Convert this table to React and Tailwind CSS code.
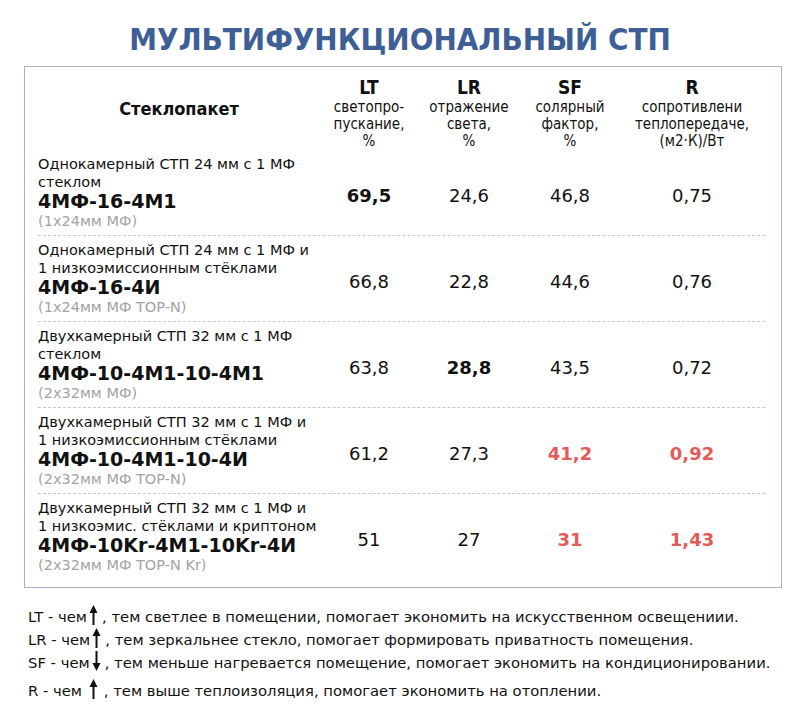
import React from "react";

const rows = [
  {
    desc: ["Однокамерный СТП 24 мм с 1 МФ", "стеклом"],
    code: "4МФ-16-4М1",
    note: "(1x24мм МФ)",
    vals: [
      { v: "69,5", b: true },
      { v: "24,6" },
      { v: "46,8" },
      { v: "0,75" },
    ],
  },
  {
    desc: ["Однокамерный СТП 24 мм с 1 МФ и", "1 низкоэмиссионным стёклами"],
    code: "4МФ-16-4И",
    note: "(1x24мм МФ TOP-N)",
    vals: [{ v: "66,8" }, { v: "22,8" }, { v: "44,6" }, { v: "0,76" }],
  },
  {
    desc: ["Двухкамерный СТП 32 мм с 1 МФ", "стеклом"],
    code: "4МФ-10-4М1-10-4М1",
    note: "(2x32мм МФ)",
    vals: [{ v: "63,8" }, { v: "28,8", b: true }, { v: "43,5" }, { v: "0,72" }],
  },
  {
    desc: ["Двухкамерный СТП 32 мм с 1 МФ и", "1 низкоэмиссионным стёклами"],
    code: "4МФ-10-4М1-10-4И",
    note: "(2x32мм МФ TOP-N)",
    vals: [
      { v: "61,2" },
      { v: "27,3" },
      { v: "41,2", r: true },
      { v: "0,92", r: true },
    ],
  },
  {
    desc: ["Двухкамерный СТП 32 мм с 1 МФ и", "1 низкоэмис. стёклами и криптоном"],
    code: "4МФ-10Kr-4М1-10Kr-4И",
    note: "(2x32мм МФ TOP-N Kr)",
    vals: [{ v: "51" }, { v: "27" }, { v: "31", r: true }, { v: "1,43", r: true }],
  },
];

const heads = [
  { k: "LT", sub: ["светопро-", "пускание,", "%"] },
  { k: "LR", sub: ["отражение", "света,", "%"] },
  { k: "SF", sub: ["солярный", "фактор,", "%"] },
  { k: "R", sub: ["сопротивлени", "теплопередаче,", "(м2·К)/Вт"] },
];

const Arrow = ({ down }) => (
  <svg
    width="9"
    height="20"
    viewBox="0 0 9 20"
    className={"inline-block align-[-3px] " + (down ? "rotate-180" : "")}
  >
    <polygon points="4.5,0 8.5,8 0.5,8" fill="#111" />
    <rect x="3.5" y="7" width="2" height="13" fill="#111" />
  </svg>
);

const condensed = "font-['DejaVu_Sans_Condensed','DejaVu_Sans',sans-serif] font-stretch-condensed";

const App = () => {
  return (
    <div className="w-[800px] h-[708px] bg-white text-[#111] font-['DejaVu_Sans',Verdana,sans-serif] overflow-hidden">
      <div className="h-[66px] pt-[21px]">
        <h1 className={`${condensed} text-center text-[31px] leading-[37px] font-bold text-[#3e5f96]`}>
          МУЛЬТИФУНКЦИОНАЛЬНЫЙ СТП
        </h1>
      </div>

      <div className="ml-[24px] w-[758px] h-[522px] border border-[#a9b5cc] pl-[13px] pr-[16px] pt-[8px]">
        <div className={`${condensed} grid grid-cols-[282px_98px_102px_100px_144px] h-[75px]`}>
          <div className="flex items-center justify-center pb-[8px] text-[18px] font-bold">Стеклопакет</div>
          {heads.map((h) => (
            <div key={h.k} className="text-center">
              <div className="text-[19px] leading-[24px] font-bold">{h.k}</div>
              {h.sub.map((s) => (
                <div key={s} className="text-[15px] leading-[17px]">
                  {s}
                </div>
              ))}
            </div>
          ))}
        </div>

        {rows.map((r, i) => (
          <div
            key={r.code}
            className={
              "grid grid-cols-[282px_98px_102px_100px_144px] py-[5px] " +
              (i < rows.length - 1 ? "border-b border-dashed border-[#c9c9c9]" : "")
            }
          >
            <div>
              {r.desc.map((d) => (
                <div key={d} className="text-[14.5px] leading-[18px] whitespace-nowrap">
                  {d}
                </div>
              ))}
              <div className="text-[19px] leading-[21px] font-bold whitespace-nowrap">{r.code}</div>
              <div className="text-[14.5px] leading-[18px] text-[#a3a3a3]">{r.note}</div>
            </div>
            {r.vals.map((c, j) => (
              <div
                key={j}
                className={
                  "flex items-center justify-center pt-[5px] text-[18px] " +
                  (c.b ? "font-bold " : "") +
                  (c.r ? "font-bold text-[#e35a5a]" : "")
                }
              >
                {c.v}
              </div>
            ))}
          </div>
        ))}
      </div>

      <div className="pl-[28px] pt-[17px] text-[14.8px] leading-[22px] whitespace-nowrap">
        <div>
          LT - чем<span className="ml-[2px] mr-[4px]"><Arrow /></span>, тем светлее в помещении, помогает экономить на искусственном освещениии.
        </div>
        <div>
          LR - чем<span className="ml-[2px] mr-[4px]"><Arrow /></span>, тем зеркальнее стекло, помогает формировать приватность помещения.
        </div>
        <div>
          SF - чем<span className="ml-[2px] mr-[4px]"><Arrow down /></span>, тем меньше нагревается помещение, помогает экономить на кондиционировании.
        </div>
        <div className="mt-[5px]">
          R - чем <span className="ml-[2px] mr-[6px]"><Arrow /></span>, тем выше теплоизоляция, помогает экономить на отоплении.
        </div>
      </div>
    </div>
  );
};

export default App;
